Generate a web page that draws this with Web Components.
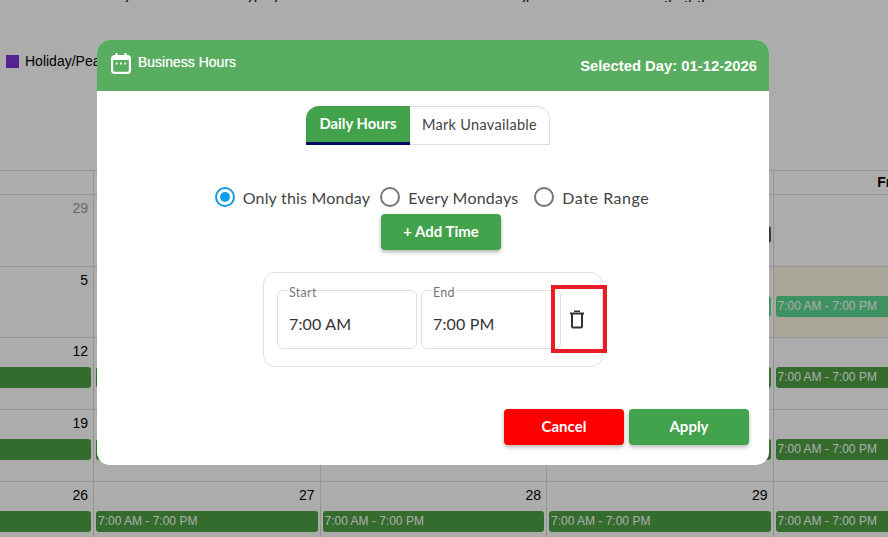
<!DOCTYPE html>
<html>
<head>
<meta charset="utf-8">
<title>Business Hours</title>
<style>
html, body { margin: 0; height: 100%; overflow: hidden; background: #fff; }
</style>
</head>
<body>
<biz-page></biz-page>

<script>
'use strict';

const MODAL_FONT = `Lato, 'Noto Sans', sans-serif`;
const SHEET_FONT = `'Liberation Sans', Arial, sans-serif`;

class CalEvent extends HTMLElement {
    constructor() {
        super();
        this.attachShadow({mode: 'open'}).innerHTML = `
            <style>
            :host {
                display: block;
                box-sizing: border-box;
                height: 21px;
                margin: 7px 2px 0 2px;
                padding-left: 2px;
                border-radius: 3px;
                background: #4da045;
                color: #fff;
                font-size: 12px;
                line-height: 21px;
                white-space: nowrap;
                overflow: hidden;
            }
            :host([kind=past]) { background: #5dd790; }
            :host([kind=blocked]) { background: #555; height: 17px; margin-top: 9px; }
            </style>
            <slot></slot>`;
    }
}

class CalCell extends HTMLElement {
    static get observedAttributes() { return ['day']; }

    constructor() {
        super();
        this.attachShadow({mode: 'open'}).innerHTML = `
            <style>
            :host {
                display: block;
                box-sizing: border-box;
                border-top: 1px solid #ddd;
                border-right: 1px solid #ddd;
                min-width: 0;
            }
            :host([today]) { background: #fcf8e3; }
            .day {
                text-align: right;
                padding: 5px 5px 0 0;
                font-size: 14px;
                line-height: 17px;
            }
            :host([other]) .day { color: #999; }
            </style>
            <div class="day"></div>
            <slot></slot>`;
    }

    attributeChangedCallback(name, oldValue, newValue) {
        this.shadowRoot.querySelector('.day').textContent = newValue;
    }
}

const WEEKS = [
    [29, 30, 31, 1, 2],
    [5, 6, 7, 8, 9],
    [12, 13, 14, 15, 16],
    [19, 20, 21, 22, 23],
    [26, 27, 28, 29, 30],
];

class CalMonth extends HTMLElement {
    constructor() {
        super();
        const shadow = this.attachShadow({mode: 'open'});
        shadow.innerHTML = `
            <style>
            :host {
                display: block;
                font-family: ${SHEET_FONT};
                color: #000;
            }
            .grid {
                display: grid;
                grid-template-columns: repeat(5, 226.5px);
                grid-template-rows: 24px repeat(5, 71.7px);
                margin-left: -132.5px;
            }
            .head {
                border-top: 1px solid #ddd;
                border-right: 1px solid #ddd;
                text-align: center;
                font-weight: bold;
                font-size: 14px;
                line-height: 23px;
            }
            </style>
            <div class="grid js-grid"></div>`;

        const grid = shadow.querySelector('.js-grid');
        ['Mon', 'Tue', 'Wed', 'Thu', 'Fri'].forEach(name => {
            const head = document.createElement('div');
            head.className = 'head';
            head.textContent = name;
            grid.append(head);
        });

        WEEKS.forEach((week, w) => {
            week.forEach((day, d) => {
                const cell = document.createElement('cal-cell');
                cell.setAttribute('day', day);
                if (w === 0 && d < 3) cell.setAttribute('other', '');
                if (w === 1 && d === 4) cell.setAttribute('today', '');

                const hasEvent = w >= 2 || (w === 1 && d >= 3) || (w === 0 && d === 3);
                if (hasEvent) {
                    const ev = document.createElement('cal-event');
                    if (w === 0) {
                        ev.setAttribute('kind', 'blocked');
                    } else {
                        if (w === 1) ev.setAttribute('kind', 'past');
                        ev.textContent = '7:00 AM - 7:00 PM';
                    }
                    cell.append(ev);
                }
                grid.append(cell);
            });
        });
    }
}

class CalLegend extends HTMLElement {
    constructor() {
        super();
        this.attachShadow({mode: 'open'}).innerHTML = `
            <style>
            :host {
                display: flex;
                align-items: center;
                gap: 6px;
                padding-left: 6px;
                font-family: ${SHEET_FONT};
                font-size: 14px;
                line-height: 16px;
                color: #000;
            }
            .swatch { width: 13px; height: 13px; background: #7e35d4; }
            </style>
            <span class="swatch"></span><slot></slot>`;
    }
}

class BizModal extends HTMLElement {
    constructor() {
        super();
        this.attachShadow({mode: 'open'}).innerHTML = `
            <style>
            :host {
                position: absolute;
                left: 97px;
                top: 40px;
                width: 672px;
                height: 425px;
                display: flex;
                flex-direction: column;
                background: #fff;
                border-radius: 13px;
                overflow: hidden;
                font-family: ${MODAL_FONT};
            }
            header {
                flex: none;
                display: flex;
                justify-content: space-between;
                height: 51px;
                padding: 0 12px 0 14px;
                background: #58ad60;
                color: #fff;
                font-family: ${SHEET_FONT};
            }
            .title {
                display: flex;
                gap: 7px;
                padding-top: 13px;
                font-size: 14px;
                line-height: 18px;
                text-shadow: 0 0 1px rgba(255, 255, 255, .6);
            }
            .day {
                padding-top: 17px;
                font-size: 14.8px;
                line-height: 18px;
                font-weight: bold;
            }
            main {
                flex: 1;
                display: flex;
                flex-direction: column;
                align-items: center;
                padding-top: 15px;
            }
            footer {
                flex: none;
                display: flex;
                justify-content: flex-end;
                gap: 5px;
                padding: 0 20px 20px 0;
            }
            </style>
            <header>
                <div class="title">
                    <svg width="20" height="21" viewBox="0 0 20 21" fill="none" stroke="#fff" stroke-width="2.2">
                        <rect x="1.1" y="3.1" width="17.8" height="16.8" rx="2.5"/>
                        <path d="M5.5 0v4M14.5 0v4"/>
                        <path d="M1 5.4h18" stroke-width="3"/>
                        <path d="M4.8 10.5h1.8M9.1 10.5h1.8M13.4 10.5h1.8" stroke-width="1.8"/>
                    </svg>
                    <span><slot name="title"></slot></span>
                </div>
                <div class="day"><slot name="day"></slot></div>
            </header>
            <main><slot></slot></main>
            <footer><slot name="actions"></slot></footer>`;
    }
}

class BizTabs extends HTMLElement {
    constructor() {
        super();
        this.attachShadow({mode: 'open'}).innerHTML = `
            <style>
            :host { display: flex; height: 39px; flex: none; margin-right: 10px; }
            </style>
            <slot></slot>`;
    }
}

class BizTab extends HTMLElement {
    constructor() {
        super();
        this.attachShadow({mode: 'open'}).innerHTML = `
            <style>
            :host {
                display: flex;
                align-items: center;
                justify-content: center;
                box-sizing: border-box;
                width: 140px;
                border: 1px solid #ddd;
                border-left: 0;
                border-radius: 0 13px 0 0;
                color: #444;
                font-size: 14.5px;
                letter-spacing: .3px;
                padding-bottom: 2px;
            }
            :host([active]) {
                width: 104px;
                border: 0;
                border-bottom: 3px solid #000b5e;
                border-radius: 13px 0 0 0;
                background: #43a24c;
                color: #fff;
                font-size: 14.8px;
                font-weight: 700;
                letter-spacing: 0;
            }
            </style>
            <slot></slot>`;
    }
}

class BizRadio extends HTMLElement {
    constructor() {
        super();
        this.attachShadow({mode: 'open'}).innerHTML = `
            <style>
            :host {
                display: inline-flex;
                align-items: center;
                gap: 8px;
                color: #444;
                font-size: 16px;
                letter-spacing: .2px;
            }
            .dot {
                box-sizing: border-box;
                width: 20px;
                height: 20px;
                border: 2px solid #757575;
                border-radius: 50%;
                display: grid;
                place-items: center;
            }
            :host([checked]) .dot { border-color: #0e9be8; }
            :host([checked]) .dot::after {
                content: '';
                width: 10px;
                height: 10px;
                border-radius: 50%;
                background: #0e9be8;
            }
            </style>
            <span class="dot"></span><span><slot></slot></span>`;
    }
}

class BizRadioGroup extends HTMLElement {
    constructor() {
        super();
        this.attachShadow({mode: 'open'}).innerHTML = `
            <style>
            :host {
                display: flex;
                align-items: center;
                justify-content: center;
                gap: 10px;
                flex: none;
                height: 24px;
                margin: 40px 2px 1px 0;
            }
            ::slotted(:last-child) { margin-left: 6px; letter-spacing: .55px; }
            </style>
            <slot></slot>`;
    }
}

class BizButton extends HTMLElement {
    constructor() {
        super();
        this.attachShadow({mode: 'open'}).innerHTML = `
            <style>
            :host {
                display: flex;
                align-items: center;
                justify-content: center;
                flex: none;
                box-sizing: border-box;
                width: 120px;
                height: 36px;
                padding-bottom: 3px;
                border-radius: 4px;
                background: #43a24c;
                color: #fff;
                font-size: 15px;
                font-weight: 700;
                box-shadow: 0 2px 4px rgba(0, 0, 0, .3);
            }
            :host([kind=danger]) { background: #ff0000; }
            </style>
            <slot></slot>`;
    }
}

class TimeField extends HTMLElement {
    static get observedAttributes() { return ['label', 'value']; }

    constructor() {
        super();
        this.attachShadow({mode: 'open'}).innerHTML = `
            <style>
            :host { display: block; flex: none; width: 140px; }
            fieldset {
                box-sizing: border-box;
                height: 69px;
                margin: -10px 0 0 0;
                padding: 0 11px;
                border: 1px solid #ddd;
                border-radius: 6px;
            }
            legend {
                margin-left: -1px;
                padding: 6px 1px 0 1px;
                color: #777;
                font-size: 12.5px;
                line-height: 14px;
                letter-spacing: .3px;
            }
            .value {
                margin-top: 14px;
                color: #333;
                font-size: 16px;
                line-height: 20px;
                letter-spacing: .15px;
            }
            </style>
            <fieldset>
                <legend class="js-label"></legend>
                <div class="value js-value"></div>
            </fieldset>`;
    }

    attributeChangedCallback(name, oldValue, newValue) {
        this.shadowRoot.querySelector('.js-' + name).textContent = newValue;
    }
}

class TrashButton extends HTMLElement {
    constructor() {
        super();
        this.attachShadow({mode: 'open'}).innerHTML = `
            <style>
            :host {
                display: flex;
                align-items: center;
                justify-content: center;
                flex: none;
                width: 32px;
                margin-left: -4px;
            }
            svg { display: block; }
            /* red marker drawn over the screenshot */
            .mark {
                position: absolute;
                left: 287px;
                top: 12px;
                width: 56px;
                height: 68px;
                box-sizing: border-box;
                border: 4px solid #e91c24;
            }
            </style>
            <svg width="14" height="19" viewBox="0 0 14 19" fill="none" stroke="#333" stroke-width="2">
                <path d="M0 3.5h14"/>
                <path d="M4 1.2h6" stroke-width="1.6"/>
                <path d="M2 4v12.5a1 1 0 0 0 1 1h8a1 1 0 0 0 1-1V4"/>
            </svg>
            <div class="mark"></div>`;
    }
}

class TimeSlots extends HTMLElement {
    constructor() {
        super();
        this.attachShadow({mode: 'open'}).innerHTML = `
            <style>
            :host {
                position: relative;
                display: flex;
                align-items: flex-start;
                gap: 4px;
                flex: none;
                box-sizing: border-box;
                width: 340px;
                height: 95px;
                margin-top: 22px;
                padding: 17px 0 0 13px;
                border: 1px solid #e0e0e0;
                border-radius: 12px;
            }
            ::slotted(trash-button) { align-self: stretch; height: 59px; }
            </style>
            <slot></slot>`;
    }
}

class BizPage extends HTMLElement {
    constructor() {
        super();
        this.attachShadow({mode: 'open'}).innerHTML = `
            <style>
            :host {
                display: block;
                position: relative;
                width: 888px;
                height: 537px;
                overflow: hidden;
            }
            .note {
                position: relative;
                height: 2px;
                overflow: hidden;
                font: 14px/16px ${SHEET_FONT};
                color: #000;
            }
            .note span { position: absolute; bottom: -1px; }
            cal-legend { margin-top: 51px; }
            cal-month { margin-top: 101px; }
            .backdrop {
                position: absolute;
                inset: 0;
                background: rgba(0, 0, 0, .325);
            }
            .add { margin-top: 4px; position: relative; left: 8px; }
            </style>

            <div class="note">
                <span style="left:124px">y</span>
                <span style="left:247px">y</span>
                <span style="left:254px">p</span>
                <span style="left:273px">y</span>
                <span style="left:521px">y</span>
                <span style="left:526px">p</span>
                <span style="left:664px">g</span>
                <span style="left:684px">g</span>
                <span style="left:697px">g</span>
            </div>
            <cal-legend>Holiday/Peak Hours</cal-legend>
            <cal-month></cal-month>
            <div class="backdrop"></div>

            <biz-modal>
                <span slot="title">Business Hours</span>
                <span slot="day">Selected Day: 01-12-2026</span>

                <biz-tabs>
                    <biz-tab active>Daily Hours</biz-tab>
                    <biz-tab>Mark Unavailable</biz-tab>
                </biz-tabs>

                <biz-radio-group>
                    <biz-radio checked>Only this Monday</biz-radio>
                    <biz-radio>Every Mondays</biz-radio>
                    <biz-radio>Date Range</biz-radio>
                </biz-radio-group>

                <biz-button class="add">+ Add Time</biz-button>

                <time-slots>
                    <time-field label="Start" value="7:00 AM"></time-field>
                    <time-field label="End" value="7:00 PM"></time-field>
                    <trash-button></trash-button>
                </time-slots>

                <biz-button slot="actions" kind="danger">Cancel</biz-button>
                <biz-button slot="actions">Apply</biz-button>
            </biz-modal>`;
    }
}

customElements.define('cal-event', CalEvent);
customElements.define('cal-cell', CalCell);
customElements.define('cal-month', CalMonth);
customElements.define('cal-legend', CalLegend);
customElements.define('biz-modal', BizModal);
customElements.define('biz-tabs', BizTabs);
customElements.define('biz-tab', BizTab);
customElements.define('biz-radio', BizRadio);
customElements.define('biz-radio-group', BizRadioGroup);
customElements.define('biz-button', BizButton);
customElements.define('time-field', TimeField);
customElements.define('trash-button', TrashButton);
customElements.define('time-slots', TimeSlots);
customElements.define('biz-page', BizPage);
</script>
</body>
</html>
